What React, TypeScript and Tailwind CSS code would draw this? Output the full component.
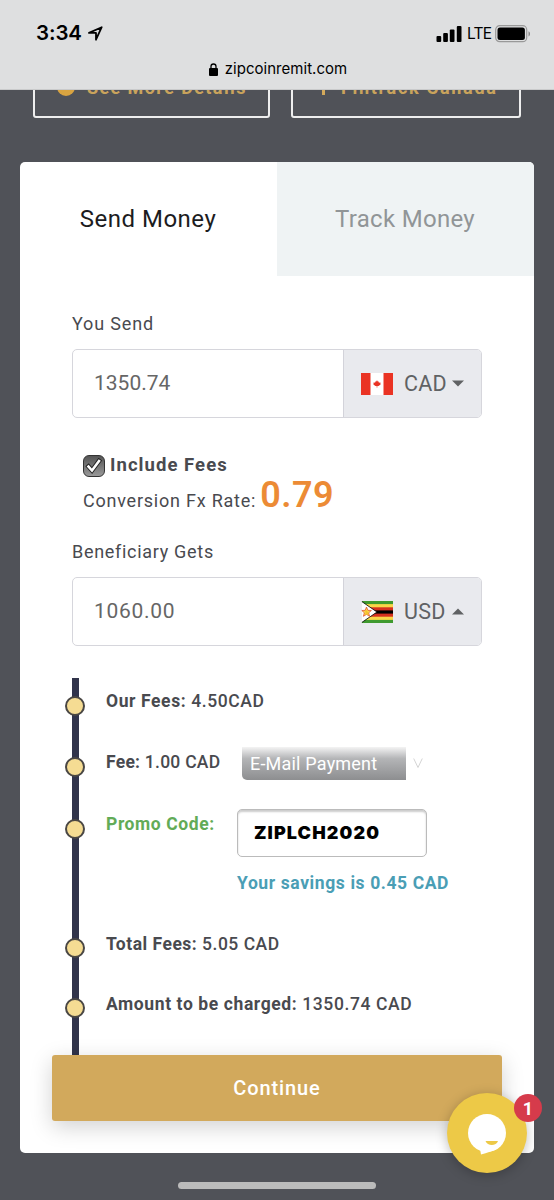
import React, { useState } from 'react';

interface AmountFieldProps {
  value: string;
  valueClass: string;
  currency: string;
  flag: React.ReactNode;
  open?: boolean;
}

const CanadaFlag = () => (
  <svg width="32" height="22" viewBox="0 0 32 22">
    <rect width="32" height="22" fill="#fff" />
    <rect width="9.5" height="22" fill="#ea3323" />
    <rect x="22.5" width="9.5" height="22" fill="#ea3323" />
    <path d="M16 7.2l1 1.6 1-.4-.2 1.6 1.3-.7.5.9-.3.8.4.6-2.2 1.5h-1.2l.1 1.3h-.8l.1-1.3h-1.200l-2.200-1.500.4-.6-.3-.8.5-.9 1.300.7-.2-1.600 1 .4z" fill="#ea3323" />
  </svg>
);

const ZimbabweFlag = () => (
  <svg width="32" height="22" viewBox="0 0 32 22">
    <rect width="32" height="22" fill="#3f9a2f" />
    <rect y="3.1" width="32" height="15.8" fill="#f9d648" />
    <rect y="6.3" width="32" height="9.4" fill="#d5301f" />
    <rect y="9.4" width="32" height="3.2" fill="#000" />
    <path d="M0 0l16 11L0 22z" fill="#fff" stroke="#000" strokeWidth="0.8" />
    <rect width="0.8" height="22" fill="#fff" />
    <path d="M5.5 6l1.4 3.3 3.5.2-2.7 2.3.9 3.5-3.1-1.9-3.1 1.9.9-3.5L.8 9.5l3.4-.2z" fill="#f9d648" stroke="#e0442a" strokeWidth="0.7" />
    <path d="M4 13.5l.8-2-.8-1.5 1.5-.8 1 1.5 1 .5-.5 2.3z" fill="#f3c52f" />
  </svg>
);

const AmountField = ({ value, valueClass, currency, flag, open }: AmountFieldProps) => (
  <div className="flex h-[69px] w-[410px] overflow-hidden rounded-[5px] border border-[#d6d6dc] bg-white">
    <div className={`flex flex-1 items-center pl-[21px] text-[21px] text-[#666] ${valueClass}`}>{value}</div>
    <div className="flex w-[138px] items-center border-l border-[#d3d3da] bg-[#e9eaee] pl-[17px] text-[21.5px] tracking-[0.3px] text-[#606264]">
      {flag}
      <span className="ml-[11px] w-[43px] pt-px">{currency}</span>
      <svg className="ml-[5px]" width="12" height="7" viewBox="0 0 12 7">
        <path d={open ? 'M0 6.5L6 .5l6 6z' : 'M0 .5h12l-6 6z'} fill="#606264" />
      </svg>
    </div>
  </div>
);

interface TimelineItemProps {
  className: string;
  children: React.ReactNode;
}

const TimelineItem = ({ className, children }: TimelineItemProps) => (
  <li className={`relative flex items-start pl-[27px] leading-6 ${className}`}>
    <span className="absolute -left-[14px] top-[7px] h-5 w-5 rounded-full border-[2.5px] border-[#4a4744] bg-[#f5dc93]" />
    {children}
  </li>
);

const StatusBar = () => (
  <header className="h-[90px] w-full shrink-0 border-b border-[#c9cacb] bg-[#dedfe0] font-['Inter',sans-serif] text-black">
    <div className="flex h-[58px] items-center justify-between pl-9 pr-[23px] pt-[9px]">
      <div className="flex items-center gap-[6px]">
        <span className="text-[20.5px] font-semibold tracking-[-0.1px]">3:34</span>
        <svg width="15" height="15" viewBox="0 0 15 15">
          <path d="M1 6.9L13.7 1.2 8 13.7V6.9z" fill="none" stroke="#000" strokeWidth="1.8" strokeLinejoin="round" />
        </svg>
      </div>
      <div className="flex items-center">
        <svg width="26" height="16" viewBox="0 0 26 16">
          <rect x="0.5" y="10" width="4.7" height="6" rx="1" />
          <rect x="7.2" y="7" width="4.7" height="9" rx="1" />
          <rect x="13.8" y="3.5" width="4.7" height="12.5" rx="1" />
          <rect x="20.8" y="0" width="4.7" height="16" rx="1" />
        </svg>
        <span className="ml-[5px] w-[25px] text-[15.5px] tracking-[-0.8px]">LTE</span>
        <svg className="ml-[3px]" width="36" height="18" viewBox="0 0 36 18">
          <rect x="0.7" y="0.7" width="31" height="16" rx="4" fill="none" stroke="#999" strokeWidth="1.2" />
          <rect x="2.5" y="2.5" width="27.4" height="12.4" rx="2.5" />
          <path d="M33.5 6.2c2 .8 2 4.4 0 5.2z" fill="#888" />
        </svg>
      </div>
    </div>
    <div className="flex h-[22px] items-center justify-center gap-[7px] pl-[2px] text-[15px] tracking-[0.03px]">
      <svg width="9" height="13" viewBox="0 0 9 13">
        <rect y="5" width="9" height="8" rx="1" />
        <path d="M2 6V3.5a2.5 2.5 0 015 0V6" fill="none" stroke="#000" strokeWidth="1.3" />
      </svg>
      <span>zipcoinremit.com</span>
    </div>
  </header>
);

export default function App() {
  const [includeFees, setIncludeFees] = useState(true);

  return (
    <div className="relative flex h-[1200px] w-[554px] flex-col overflow-hidden bg-[#505258] font-['Roboto',sans-serif] text-[#494a4f]">
      <StatusBar />

      {/* Hero links, scrolled partly under the browser bar */}
      <div className="flex h-[72px] shrink-0 items-start gap-[21px] overflow-hidden pl-[33px]">
        <div className="-mt-7 flex h-14 w-[237px] items-center rounded-[3px] border-2 border-[#eee] pl-[22px] text-[18px] font-bold text-[#c9a35c]">
          <span className="-mt-[7px] mr-3 h-[18px] w-[18px] rounded-full bg-[#d9a441]" />
          <span className="-mt-[6px] whitespace-nowrap tracking-[1.4px]">See More Details</span>
        </div>
        <div className="-mt-7 flex h-14 w-[230px] items-center rounded-[3px] border-2 border-[#eee] pl-[29px] text-[18px] font-bold text-[#c9a35c]">
          <span className="-mt-[7px] mr-[16px] h-4 w-[3px] bg-[#d3a95b]" />
          <span className="-mt-[6px] whitespace-nowrap tracking-[1.7px]">Fintrack Canada</span>
        </div>
      </div>

      <main className="mx-5 h-[991px] shrink-0 overflow-hidden rounded-[5px] bg-white">
        <div className="flex h-[114px] text-[24px]">
          <div className="flex w-[257px] items-center justify-center pr-px tracking-[0.5px] text-[#1c1c1e]">Send Money</div>
          <div className="flex flex-1 items-center justify-center bg-[#eff3f4] pr-px tracking-[0.3px] text-[#919597]">Track Money</div>
        </div>

        <div className="px-[52px] pt-9">
          <div className="h-6 text-[18px] leading-6 tracking-[0.85px]">You Send</div>
          <div className="mt-[13px]">
            <AmountField value="1350.74" valueClass="tracking-[0px]" currency="CAD" flag={<CanadaFlag />} />
          </div>

          <div className="mt-9 flex h-6 items-center pl-[11px]">
            <button
              className="flex h-[22px] w-[22px] items-center justify-center rounded-[6px] border border-[#333] bg-linear-to-b from-[#555] to-[#999]"
              onClick={() => setIncludeFees(!includeFees)}
            >
              {includeFees && (
                <svg width="18" height="18" viewBox="0 0 18 18" fill="none" strokeLinecap="square">
                  <path d="M3.5 9.5l3.5 4L14 4" stroke="#222" strokeWidth="4.5" />
                  <path d="M3.5 9.5l3.5 4L14 4" stroke="#fff" strokeWidth="2.6" />
                </svg>
              )}
            </button>
            <span className="ml-[5px] text-[18.5px] font-bold tracking-[1.05px]">Include Fees</span>
          </div>
          <div className="flex h-[34px] items-baseline pl-[11px] leading-[34px]">
            <span className="text-[18px] tracking-[0.77px]">Conversion Fx Rate:</span>
            <span className="ml-[4px] text-[36px] font-semibold tracking-[0.5px] text-[#ec8b35]">0.79</span>
          </div>

          <div className="mt-[27px] h-6 pt-px text-[18px] leading-6 tracking-[0.7px]">Beneficiary Gets</div>
          <div className="mt-[14px]">
            <AmountField value="1060.00" valueClass="tracking-[0.7px]" currency="USD" flag={<ZimbabweFlag />} open />
          </div>

          <ul className="mt-8 h-[377px] border-l-[7px] border-[#31344b] pt-[11px] text-[17.5px] font-medium tracking-[0.6px]">
            <TimelineItem className="h-[61px]">
              <span><b>Our Fees:</b> 4.50CAD</span>
            </TimelineItem>
            <TimelineItem className="h-[62px]">
              <span className="w-[136px] whitespace-nowrap tracking-[0.25px]"><b>Fee:</b> 1.00 CAD</span>
              <div className="-mt-[3px] flex h-[33px] w-[164px] items-center rounded-bl-[5px] bg-linear-to-b from-[#f4f4f4] via-[#b4b5b7] via-35% to-[#8d8e90] pl-2 text-[18px] font-normal tracking-[0.2px] text-white">
                E-Mail Payment
              </div>
              <svg className="ml-[7px] mt-2" width="10" height="11" viewBox="0 0 10 11">
                <path d="M.7.5L5 9.5 9.3.5" fill="none" stroke="#d4d4d4" />
              </svg>
            </TimelineItem>
            <TimelineItem className="h-[119px]">
              <span className="w-[131px] font-bold text-[#62ab57]">Promo Code:</span>
              <div>
                <div className="-mt-[3px] flex h-12 w-[190px] items-center rounded-[5px] border border-[#bbb] pl-4 font-['Inter',sans-serif] text-[18px] font-black tracking-[1.1px] text-black shadow-[inset_0_2px_2px_#ccc]">
                  ZIPLCH2020
                </div>
                <div className="mt-[14px] whitespace-nowrap font-bold text-[#4a9eb5]">Your savings is 0.45 CAD</div>
              </div>
            </TimelineItem>
            <TimelineItem className="h-[60px]">
              <span className="pt-px tracking-[0.5px]"><b>Total Fees:</b> 5.05 CAD</span>
            </TimelineItem>
            <TimelineItem className="h-[60px]">
              <span className="pt-px"><b>Amount to be charged:</b> 1350.74 CAD</span>
            </TimelineItem>
          </ul>
        </div>

        <button className="mx-8 block h-[66px] w-[450px] rounded-[3px] bg-[#d2a95c] text-[20px] font-medium tracking-[0.9px] text-white shadow-[0_6px_22px_rgba(0,0,0,0.18)]">
          Continue
        </button>
      </main>

      {/* Chat launcher floating over the page */}
      <div className="absolute left-[447px] top-[1093px] flex h-20 w-20 items-center justify-center rounded-full bg-[#edc947] shadow-[0_2px_12px_rgba(0,0,0,0.25)]">
        <svg className="mt-[2px]" width="40" height="42" viewBox="0 0 40 42">
          <circle cx="20" cy="20" r="19" fill="#fff" />
          <path d="M13 36l1 5.5c6-2 12-3 17-6.5z" fill="#fff" />
          <path d="M18.5 28H31c-1.5 5-10.5 5.5-12.5 0z" fill="#edc947" />
        </svg>
        <span className="absolute -right-[15px] top-[1px] flex h-7 w-7 items-center justify-center rounded-full bg-[#d63b4b] text-[18px] font-bold text-white">1</span>
      </div>

      <div className="mx-auto mt-[29px] h-[7px] w-[198px] shrink-0 rounded-full bg-[#bbb]" />
    </div>
  );
}
